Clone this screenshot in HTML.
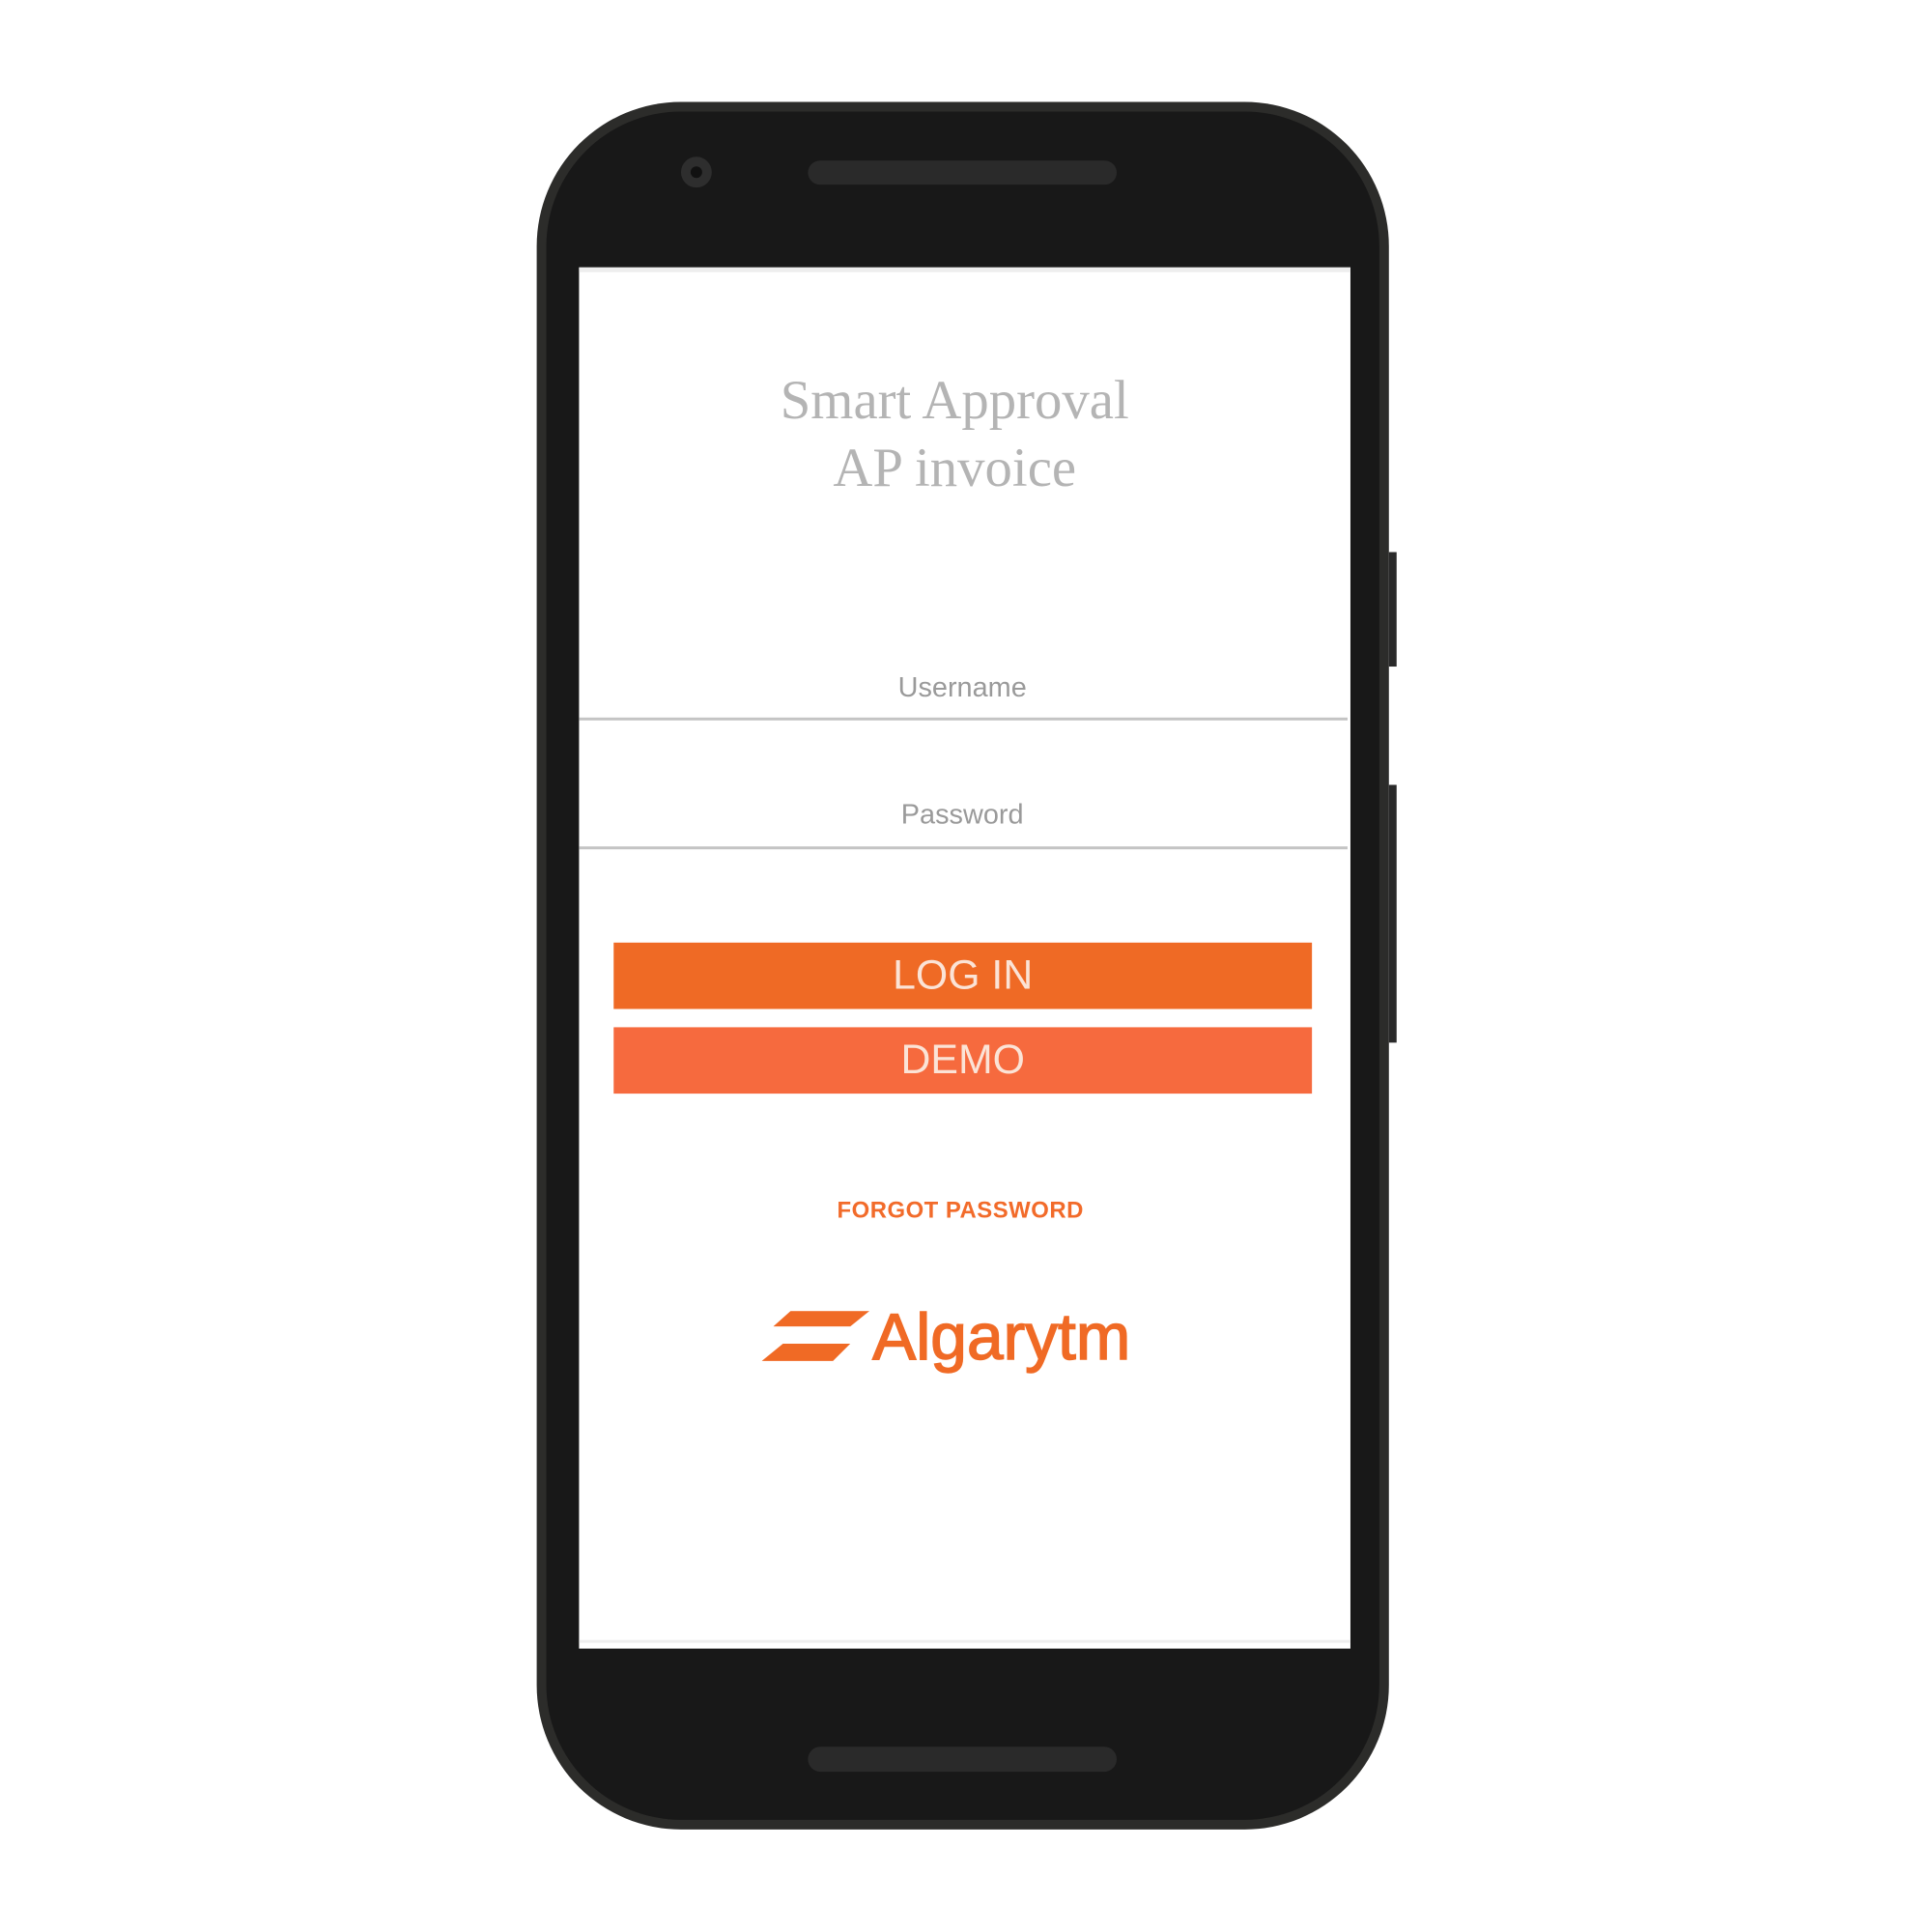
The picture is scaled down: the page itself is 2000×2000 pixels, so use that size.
<!DOCTYPE html>
<html><head><meta charset="utf-8"><style>
html,body{margin:0;padding:0;width:2000px;height:2000px;background:#fff;overflow:hidden;font-family:"Liberation Sans",sans-serif}
#w{position:absolute;left:0;top:0;width:2000px;height:2000px;transform:scale(0.9957);transform-origin:0 0}
.abs{position:absolute}
.phone{left:558px;top:106px;width:886px;height:1796px;background:#2c2c2a;border-radius:150px}
.inner{left:568px;top:116px;width:866px;height:1776px;background:#181818;border-radius:140px}
.screen{left:602px;top:278px;width:802px;height:1436px;background:#fff}
.btn{position:absolute;left:638px;width:726px;height:69px;color:#fbe3d6;font-size:43px;text-align:center;line-height:69px}
.c{position:absolute;left:602px;width:801px;text-align:center}
.line{position:absolute;left:602px;width:799px;height:3px;background:#c4c4c4}
</style></head><body><div id="w">
<div class="abs phone"></div>
<div class="abs inner"></div>
<div class="abs" style="left:1444px;top:574px;width:8px;height:119px;background:#2a2a2a"></div>
<div class="abs" style="left:1444px;top:816px;width:8px;height:268px;background:#2a2a2a"></div>
<div class="abs" style="left:708px;top:163px;width:32px;height:32px;border-radius:50%;background:#2e2e2e"></div>
<div class="abs" style="left:718px;top:173px;width:12px;height:12px;border-radius:50%;background:#111"></div>
<div class="abs" style="left:840px;top:167px;width:321px;height:25px;border-radius:13px;background:#2a2a2a"></div>
<div class="abs" style="left:840px;top:1816px;width:321px;height:26px;border-radius:13px;background:#2a2a2a"></div>
<div class="abs screen"></div>
<div class="abs" style="left:602px;top:278px;width:802px;height:5px;background:#eee"></div>
<div class="abs" style="left:602px;top:1705px;width:802px;height:3px;background:#eee"></div>
<div class="c" style="top:382px;left:592px;font-family:'Liberation Serif',serif;font-size:57px;line-height:70px;color:#b4b4b4">Smart Approval<br>AP invoice</div>
<div class="c" style="top:699px;left:600px;font-size:29px;color:#9a9a9a">Username</div>
<div class="line" style="top:746px"></div>
<div class="c" style="top:831px;left:600px;font-size:29px;color:#9a9a9a">Password</div>
<div class="line" style="top:880px"></div>
<div class="btn" style="top:980px;background:#ef6a25">LOG IN</div>
<div class="btn" style="top:1068px;background:#f66a3e">DEMO</div>
<div class="c" style="top:1245px;left:598px;font-size:24px;font-weight:bold;color:#f26b2a;letter-spacing:0.5px">FORGOT PASSWORD</div>
<svg class="abs" style="left:792px;top:1363px" width="115" height="56" viewBox="0 0 115 56">
<polygon points="30,0 112,0 92,16 12,16" fill="#f06a25"/>
<polygon points="22,34 92,34 74,52 0,52" fill="#f06a25"/>
</svg>
<div class="abs" style="left:907px;top:1350px;font-size:68px;color:#f06a25;letter-spacing:0px;-webkit-text-stroke:1.5px #f06a25;line-height:80px">Algarytm</div>
</div></body></html>
